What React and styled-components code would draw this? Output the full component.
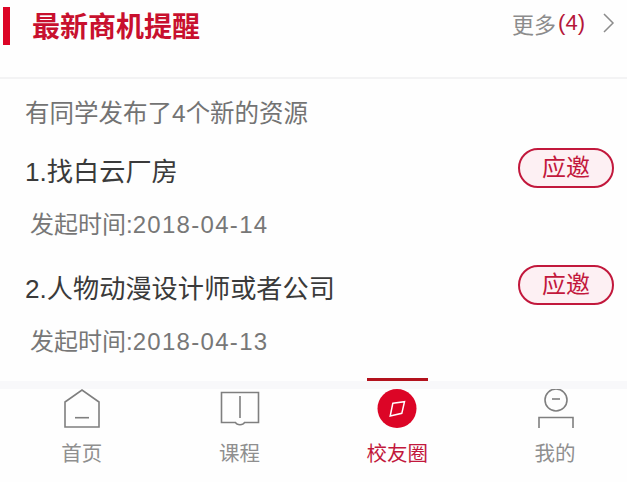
import styled, { createGlobalStyle } from 'styled-components';

const GlobalStyle = createGlobalStyle`
  html, body {
    margin: 0;
    padding: 0;
    background: #fefefe;
  }
  body {
    font-family: "Liberation Sans", "Noto Sans CJK SC", sans-serif;
  }
`;

const Page = styled.div`
  width: 627px;
  height: 482px;
  display: flex;
  flex-direction: column;
  overflow: hidden;
  background: #fefefe;
`;

const Header = styled.header`
  flex: none;
  height: 79px;
  box-sizing: border-box;
  padding: 7px 11px 0 3px;
  display: flex;
  align-items: flex-start;
  border-bottom: 2px solid #f3f3f4;
`;

const Mark = styled.div`
  width: 7px;
  height: 38px;
  background: #dc0526;
`;

const Title = styled.h1`
  margin: 0 0 0 22px;
  font-size: 28px;
  line-height: 42px;
  font-weight: 700;
  color: #c8102e;
  flex: 1;
`;

const More = styled.div`
  display: flex;
  align-items: center;
  height: 32px;
  font-size: 22px;
  color: #8c8c8c;
`;

const Count = styled.span`
  color: #b5163a;
  margin: 0 17px 0 2px;
`;

const Body = styled.main`
  flex: 1;
  padding: 18px 13px 0 25px;
`;

const Notice = styled.p`
  margin: 0;
  font-size: 24.5px;
  line-height: 34px;
  color: #737373;
`;

const Item = styled.section`
  margin-top: ${(p) => p.$top}px;
`;

const ItemRow = styled.div`
  display: flex;
  align-items: center;
  justify-content: space-between;
  height: 40px;
`;

const ItemTitle = styled.div`
  margin-top: 3px;
  font-size: 26.2px;
  color: #3a3a3a;
`;

const JoinButton = styled.button`
  width: 96px;
  height: 40px;
  box-sizing: border-box;
  padding: 0;
  border: 2px solid #c2183c;
  border-radius: 20px;
  background: #fdf0f3;
  color: #c2183c;
  font-family: inherit;
  font-size: 24px;
  line-height: 34px;
`;

const ItemTime = styled.div`
  margin: 20px 0 0 5px;
  font-size: 24px;
  line-height: 34px;
  color: #777;
`;

const TimeDate = styled.span`
  letter-spacing: 1.3px;
`;

const TabBar = styled.nav`
  flex: none;
  height: 101px;
  box-sizing: border-box;
  padding-left: 3px;
  display: grid;
  grid-template-columns: repeat(4, 157.7px);
  border-top: 8px solid #f8f8fa;
`;

const Tab = styled.div`
  position: relative;
  display: flex;
  flex-direction: column;
  align-items: center;
  color: ${(p) => (p.$active ? '#c2183c' : '#8f8f8f')};
`;

const ActiveLine = styled.div`
  position: absolute;
  top: -11px;
  left: 49px;
  width: 61px;
  height: 3px;
  background: #b3121d;
`;

const TabIcon = styled.svg`
  width: 44px;
  height: 42px;
  display: block;
  fill: none;
  stroke: #7f7f7f;
  stroke-width: 1.6;
`;

const TabLabel = styled.span`
  margin-top: 8px;
  font-size: 20.5px;
  line-height: 30px;
`;

const HomeIcon = () => (
  <TabIcon viewBox="0 0 44 42">
    <path d="M5 38V13L22 1 39 13V38Z" />
    <path d="M15 28.7H29" />
  </TabIcon>
);

const BookIcon = () => (
  <TabIcon viewBox="0 0 44 42">
    <path d="M3.5 3.5H40.5V33.5H26.5C25 36.5 19 36.5 17.5 33.5H3.5Z" />
    <path d="M22 7V29" />
  </TabIcon>
);

const CompassIcon = () => (
  <TabIcon viewBox="0 0 44 42">
    <circle cx="22" cy="19.5" r="19.5" fill="#dc0526" stroke="none" />
    <path d="M17.8 14.3L29.5 12.7 26.8 24.3 15.2 27Z" stroke="#fff" strokeWidth="1.5" />
  </TabIcon>
);

const UserIcon = () => (
  <TabIcon viewBox="0 0 44 42">
    <circle cx="23" cy="11" r="11" />
    <path d="M19 10H27" />
    <path d="M6 39V28.5H40V39" />
  </TabIcon>
);

const items = [
  { title: '1.找白云厂房', date: '2018-04-14', top: 17 },
  { title: '2.人物动漫设计师或者公司', date: '2018-04-13', top: 23 },
];

const tabs = [
  { label: '首页', icon: <HomeIcon /> },
  { label: '课程', icon: <BookIcon /> },
  { label: '校友圈', icon: <CompassIcon />, active: true },
  { label: '我的', icon: <UserIcon /> },
];

const App = () => {
  return (
    <Page>
      <GlobalStyle />
      <Header>
        <Mark />
        <Title>最新商机提醒</Title>
        <More>
          更多<Count>(4)</Count>
          <svg width="14" height="20" viewBox="0 0 14 20" fill="none" stroke="#8c8c8c" strokeWidth="1.5">
            <path d="M2 1L11 10 2 19" />
          </svg>
        </More>
      </Header>
      <Body>
        <Notice>有同学发布了4个新的资源</Notice>
        {items.map((item) => (
          <Item key={item.title} $top={item.top}>
            <ItemRow>
              <ItemTitle>{item.title}</ItemTitle>
              <JoinButton>应邀</JoinButton>
            </ItemRow>
            <ItemTime>
              发起时间:<TimeDate>{item.date}</TimeDate>
            </ItemTime>
          </Item>
        ))}
      </Body>
      <TabBar>
        {tabs.map((tab) => (
          <Tab key={tab.label} $active={tab.active}>
            {tab.active && <ActiveLine />}
            {tab.icon}
            <TabLabel>{tab.label}</TabLabel>
          </Tab>
        ))}
      </TabBar>
    </Page>
  );
};

export default App;
